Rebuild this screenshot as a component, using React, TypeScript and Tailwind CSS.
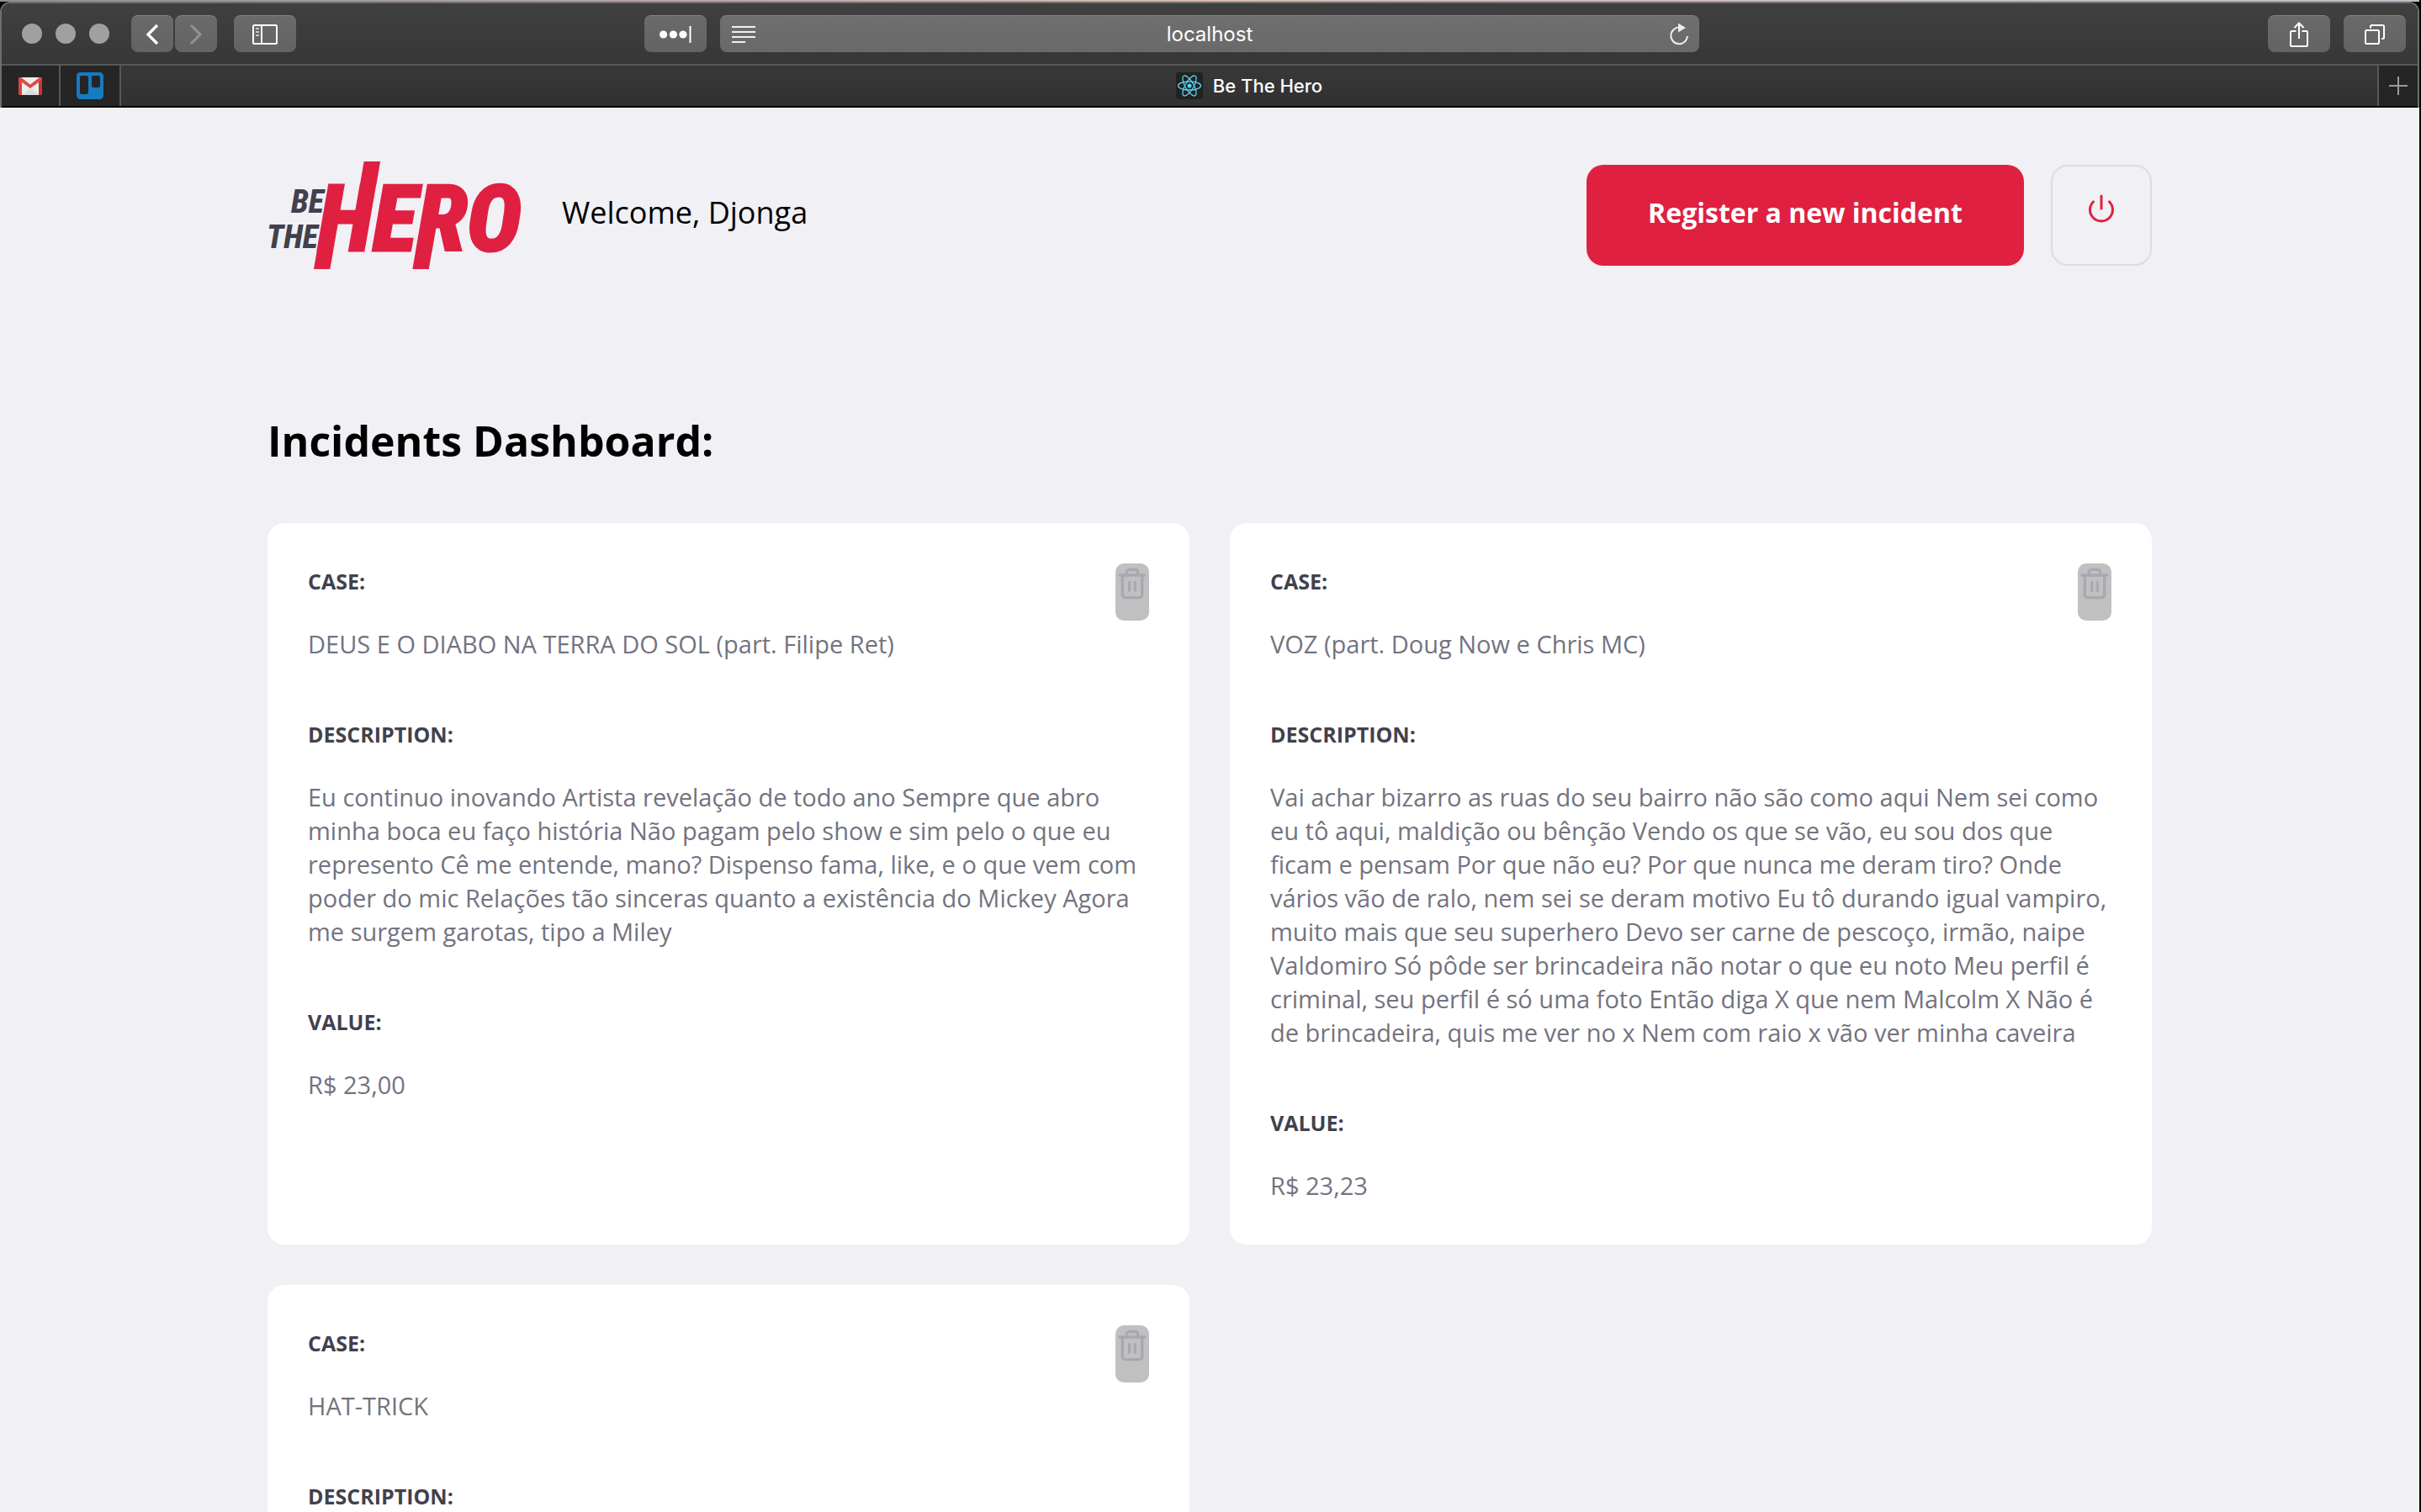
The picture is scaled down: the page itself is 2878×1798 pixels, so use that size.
import React from "react";
import { FiPower, FiTrash2 } from "react-icons/fi";

type Incident = { title: string; description?: string; value?: string };

const incidents: Incident[] = [
  {
    title: "DEUS E O DIABO NA TERRA DO SOL (part. Filipe Ret)",
    description:
      "Eu continuo inovando Artista revelação de todo ano Sempre que abro minha boca eu faço história Não pagam pelo show e sim pelo o que eu represento Cê me entende, mano? Dispenso fama, like, e o que vem com poder do mic Relações tão sinceras quanto a existência do Mickey Agora me surgem garotas, tipo a Miley",
    value: "R$ 23,00",
  },
  {
    title: "VOZ (part. Doug Now e Chris MC)",
    description:
      "Vai achar bizarro as ruas do seu bairro não são como aqui Nem sei como eu tô aqui, maldição ou bênção Vendo os que se vão, eu sou dos que ficam e pensam Por que não eu? Por que nunca me deram tiro? Onde vários vão de ralo, nem sei se deram motivo Eu tô durando igual vampiro, muito mais que seu superhero Devo ser carne de pescoço, irmão, naipe Valdomiro Só pôde ser brincadeira não notar o que eu noto Meu perfil é criminal, seu perfil é só uma foto Então diga X que nem Malcolm X Não é de brincadeira, quis me ver no x Nem com raio x vão ver minha caveira",
    value: "R$ 23,23",
  },
  { title: "HAT-TRICK" },
];

function ToolButton({ label, wide, children }: { label: string; wide?: boolean; children: React.ReactNode }) {
  return (
    <button
      type="button"
      aria-label={label}
      className={`flex h-11 items-center justify-center rounded-lg border-t border-[#838383] bg-linear-to-b from-[#6a6a6a] to-[#636363] ${wide ? "w-[74px]" : "w-[50px]"}`}
    >
      {children}
    </button>
  );
}

function Toolbar() {
  return (
    <div className="grid h-[72px] grid-cols-[1fr_1164px_1fr] items-center bg-linear-to-b from-[#404040] to-[#373737]">
      <div className="flex items-center justify-between pr-4 pl-6">
        <div className="flex items-center">
          <div className="flex gap-4">
            <span className="size-6 rounded-full bg-[#a0a0a0]" />
            <span className="size-6 rounded-full bg-[#a0a0a0]" />
            <span className="size-6 rounded-full bg-[#a0a0a0]" />
          </div>
          <div className="ml-[26px] flex gap-0.5">
            <ToolButton label="Back">
              <svg width="16" height="26" viewBox="0 0 16 26" fill="none" stroke="#fff" strokeWidth="3.4">
                <path d="M14 2 3 13l11 11" />
              </svg>
            </ToolButton>
            <ToolButton label="Forward">
              <svg width="16" height="26" viewBox="0 0 16 26" fill="none" stroke="#929292" strokeWidth="3">
                <path d="m2 2 11 11L2 24" />
              </svg>
            </ToolButton>
          </div>
          <div className="ml-5 flex">
            <ToolButton label="Sidebar" wide>
              <svg width="30" height="24" viewBox="0 0 30 24" fill="none" stroke="#fff" strokeWidth="2">
                <rect x="1" y="1" width="28" height="22" rx="1.5" />
                <path d="M11 1v22" />
                <path d="M4 5h4M4 9h4M4 13h4" stroke="#c4c4c4" />
              </svg>
            </ToolButton>
          </div>
        </div>
        <ToolButton label="Passwords" wide>
          <svg width="38" height="20" viewBox="0 0 38 20" fill="#fff">
            <circle cx="4.6" cy="10" r="4.6" />
            <circle cx="16.4" cy="10" r="4.6" />
            <circle cx="28" cy="10" r="4.6" />
            <rect x="35.5" y="0" width="2" height="20" />
          </svg>
        </ToolButton>
      </div>
      <div className="flex h-11 items-center justify-between rounded-lg border-t border-[#838383] bg-linear-to-b from-[#6f6f6f] to-[#696969] px-3">
        <button type="button" aria-label="Reader">
          <svg width="32" height="22" viewBox="0 0 32 22" stroke="#f0f0f0" strokeWidth="2">
            <path d="M2 2h28M2 8h28M2 14h28M2 20h16" />
          </svg>
        </button>
        <input
          type="text"
          aria-label="Address"
          defaultValue="localhost"
          className="w-96 bg-transparent text-center text-2xl leading-8 text-white outline-none"
        />
        <button type="button" aria-label="Reload" className="flex w-8 justify-end">
          <svg width="24" height="28" viewBox="0 0 24 28">
            <path d="M12.5 5.6A9.8 9.8 0 1 0 21.9 16" fill="none" stroke="#ececec" strokeWidth="2" />
            <path d="M11 .8v10.6L20 6z" fill="#ececec" />
          </svg>
        </button>
      </div>
      <div className="flex justify-end gap-4 pr-3.5">
        <ToolButton label="Share" wide>
          <svg width="22" height="32" viewBox="0 0 22 32" fill="none" stroke="#fff" strokeWidth="2">
            <path d="M7.5 12h-5Q1 12 1 13.5v15Q1 30 2.500 30h17q1.500 0 1.500-1.500v-15Q21 12 19.500 12h-5" />
            <path d="M11 21V2.500M5.500 8 11 2.500 16.500 8" />
          </svg>
        </ToolButton>
        <ToolButton label="Tabs" wide>
          <svg width="24" height="24" viewBox="0 0 24 24" fill="none" stroke="#fff" strokeWidth="2">
            <rect x="1" y="7" width="16" height="16" rx="1.500" />
            <path d="M7 4.500v-2Q7 1 8.500 1h13Q23 1 23 2.500v13q0 1.500-1.500 1.500H20" />
          </svg>
        </ToolButton>
      </div>
    </div>
  );
}

function TabBar() {
  return (
    <div className="flex h-[52px] border-t-2 border-b-2 border-t-[#585858] border-b-black bg-linear-to-b from-[#383838] to-[#313131] text-white">
      <button type="button" aria-label="Gmail" className="flex w-[70px] items-center justify-center border-r-2 border-[#585858] bg-[#252525]">
        <svg width="28" height="22" viewBox="0 0 28 22">
          <rect x="1" y="1" width="26" height="21" rx="1.500" fill="#ededed" />
          <path d="M4 22 14 14l10 8z" fill="#dcdcdc" />
          <path d="M0 2.500v18Q0 22 1.500 22H4V6z" fill="#d9453a" />
          <path d="M28 2.500v18Q28 22 26.500 22H24V6z" fill="#c23a2e" />
          <path d="M0 2.500Q0 1 1.500 1H3l11 8.500L25 1h1.500Q28 1 28 2.500 28 4 27 4.800L14 14 1 4.800Q0 4 0 2.500z" fill="#e04b3f" />
        </svg>
      </button>
      <button type="button" aria-label="Trello" className="flex w-[72px] items-center justify-center border-r-2 border-[#585858] bg-[#252525]">
        <svg width="32" height="32" viewBox="0 0 32 32">
          <rect width="32" height="32" rx="4.500" fill="#167bc0" />
          <rect x="4" y="4" width="10" height="22" rx="2" fill="#252525" />
          <rect x="18" y="4" width="10" height="14" rx="2" fill="#252525" />
        </svg>
      </button>
      <button type="button" className="flex flex-1 items-center justify-center gap-3 text-[22px] leading-8 font-medium">
        <svg width="32" height="32" viewBox="0 0 32 32" fill="none" stroke="#5bd3f0" strokeWidth="1.300">
          <rect width="32" height="32" rx="3" fill="#222" stroke="none" />
          <ellipse cx="16" cy="16" rx="13.500" ry="5" />
          <ellipse cx="16" cy="16" rx="13.500" ry="5" transform="rotate(60 16 16)" />
          <ellipse cx="16" cy="16" rx="13.500" ry="5" transform="rotate(120 16 16)" />
          <circle cx="16" cy="16" r="2.500" fill="#5bd3f0" stroke="none" />
        </svg>
        Be The Hero
      </button>
      <button type="button" aria-label="New tab" className="flex w-12 items-center justify-center border-l-2 border-[#585858] bg-[#252525]">
        <svg width="22" height="22" viewBox="0 0 22 22" stroke="#9a9a9a" strokeWidth="2">
          <path d="M11 0v22M0 11h22" />
        </svg>
      </button>
    </div>
  );
}

function Logo() {
  return (
    <svg
      width="302"
      height="128"
      viewBox="0 0 302 128"
      role="img"
      aria-label="Be The Hero"
      overflow="visible"
      fontFamily="'Roboto Condensed', 'Liberation Sans', sans-serif"
      fontWeight="800"
      fontStyle="italic"
    >
      <g fill="#41414d">
        <text x="28" y="61" fontSize="38">BE</text>
        <text x="-1" y="103" fontSize="38">THE</text>
      </g>
      <g fill="#e02041">
        <text x="60" y="106" fontSize="110" stroke="#e02041" strokeWidth="3">HERO</text>
        {/* slashes that run past the word's top and bottom edges */}
        <path d="M58.600 107 55 128H74.400L78 107z" />
        <path d="M110 27 114.600 0H134.100L129.500 27z" />
        <path d="M176 107 172.400 128H191.800L195.400 107z" />
      </g>
    </svg>
  );
}

function Field({ label, text }: { label: string; text?: string }) {
  return (
    <section>
      <h2 className="text-[25px] leading-10 font-bold text-[#41414d]">{label}</h2>
      {text && <p className="mt-[35px] text-[29px] leading-10 text-[#737380]">{text}</p>}
    </section>
  );
}

function IncidentCard({ incident }: { incident: Incident }) {
  return (
    <li className="relative flex flex-col gap-[67px] rounded-[20px] bg-white px-12 pt-[49px] pb-[50px]">
      <Field label="CASE:" text={incident.title} />
      <Field label="DESCRIPTION:" text={incident.description} />
      {incident.value && <Field label="VALUE:" text={incident.value} />}
      <button
        type="button"
        aria-label={`Delete ${incident.title}`}
        className="absolute top-12 right-12 flex h-[68px] w-10 justify-center rounded-[10px] bg-[#c0c0c0] pt-1 text-[#a8a8b3]"
      >
        <FiTrash2 size={40} />
      </button>
    </li>
  );
}

export default function App() {
  return (
    <div className="flex h-screen flex-col overflow-hidden bg-black pr-0.5 font-['Inter',sans-serif]">
      <div className="h-0.5 shrink-0 bg-linear-to-r from-[#8f8d96] via-[#d8b8b0] to-[#b9c0c8]" />
      <div className="shrink-0 overflow-hidden rounded-t-xl border-t-2 border-r-2 border-l-2 border-[#6e6e6e]">
        <Toolbar />
        <TabBar />
      </div>
      <main className="flex-1 overflow-hidden bg-[#f0f0f5] px-8 pt-16 font-['Open_Sans',sans-serif]">
        <div className="mx-auto max-w-[2240px]">
          <header className="flex items-center">
            <Logo />
            <span className="ml-12 pb-1.5 text-4xl leading-12 text-black">Welcome, Djonga</span>
            <a
              href="#new"
              className="ml-auto flex h-[120px] w-[520px] items-center justify-center rounded-[20px] bg-[#e02041] pb-1.5 text-[32px] leading-12 font-bold text-white"
            >
              Register a new incident
            </a>
            <button
              type="button"
              aria-label="Log out"
              className="ml-8 flex size-[120px] items-center justify-center rounded-[20px] border-2 border-[#dcdce6] pb-4 text-[#e02041]"
            >
              <FiPower size={36} />
            </button>
          </header>
          <h1 className="mt-[157px] mb-[51px] text-[50px] leading-[94px] font-bold text-black">Incidents Dashboard:</h1>
          <ul className="grid grid-cols-2 gap-12">
            {incidents.map((incident) => (
              <IncidentCard key={incident.title} incident={incident} />
            ))}
          </ul>
        </div>
      </main>
    </div>
  );
}
